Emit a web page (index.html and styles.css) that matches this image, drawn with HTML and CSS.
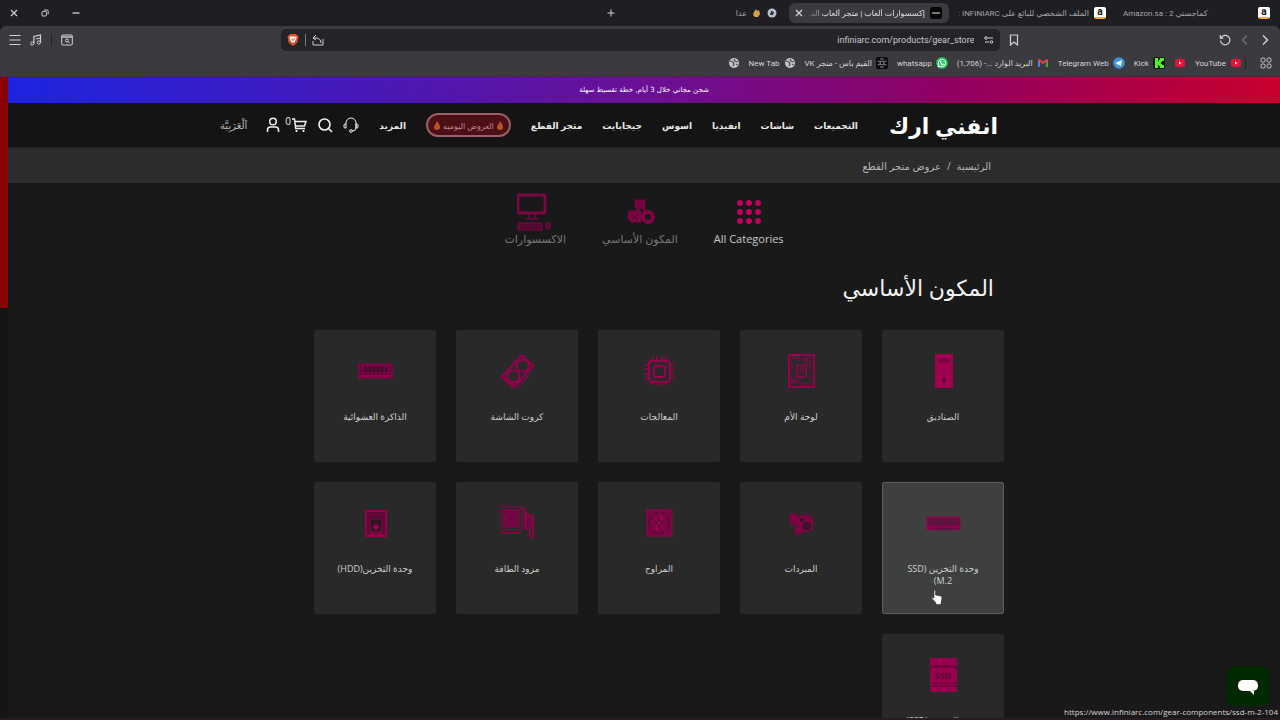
FILE: index.html
```html
<!DOCTYPE html>
<html lang="ar" dir="rtl">
<head>
    <meta charset="UTF-8">
    <meta name="viewport" content="width=device-width, initial-scale=1.0">
    <title>إكسسوارات ألعاب | متجر ألعاب القيمرز</title>
    <link rel="stylesheet" href="styles.css">
</head>
<body>
    <!-- Browser window -->
    <div class="tabstrip">
        <div class="tab">
            <span class="fav amazon">a</span>
            <span class="tab-title" dir="ltr">Amazon.sa : 2 كماجستي</span>
        </div>
        <div class="tab">
            <span class="fav amazon">a</span>
            <span class="tab-title">الملف الشخصي للبائع على INFINIARC :</span>
        </div>
        <div class="tab active">
            <span class="fav black"></span>
            <span class="tab-title">إكسسوارات ألعاب | متجر ألعاب القيـ</span>
            <button class="icon-btn" aria-label="إغلاق"><svg width="8" height="8" viewBox="0 0 8 8"><path d="M1 1l6 6M7 1L1 7" stroke-width="1.4"/></svg></button>
        </div>
        <div class="tab">
            <svg class="fav" viewBox="0 0 12 12"><circle cx="6" cy="6" r="4.5" fill="#b8c0c8" stroke="none"/><path d="M4 8l1-4 3 1-1 3z" fill="#26323c" stroke="none"/></svg>
            <svg class="hand" width="9" height="10" viewBox="0 0 9 10"><path d="M2 4l2-3 1 2 2-1 1 4-2 3H3L1 7z" fill="#d9a144" stroke="none"/></svg>
            <span class="tab-title">عدا</span>
        </div>
        <button class="icon-btn new-tab" aria-label="علامة تبويب جديدة"><svg width="8" height="8" viewBox="0 0 8 8"><path d="M4 0.500v7M.5 4h7"/></svg></button>
        <div class="window-buttons">
            <button class="icon-btn" aria-label="تصغير"><svg width="8" height="8" viewBox="0 0 8 8"><path d="M0.500 4h7" stroke-width="1.300"/></svg></button>
            <button class="icon-btn" aria-label="استعادة"><svg width="8" height="8" viewBox="0 0 8 8"><rect x="1" y="2.500" width="4.500" height="4.500" rx="1"/><path d="M3 1h3a1.200 1.200 0 0 1 1.200 1.200v3"/></svg></button>
            <button class="icon-btn" aria-label="إغلاق النافذة"><svg width="8" height="8" viewBox="0 0 8 8"><path d="M1 1l6 6M7 1L1 7" stroke-width="1.200"/></svg></button>
        </div>
    </div>

    <div class="toolbar">
        <button class="icon-btn" aria-label="رجوع"><svg width="12" height="12" viewBox="0 0 12 12"><path d="M4 1.500L8.500 6 4 10.500" stroke-width="1.500"/></svg></button>
        <button class="icon-btn dim" aria-label="تقدم"><svg width="12" height="12" viewBox="0 0 12 12"><path d="M8 1.500L3.500 6 8 10.500" stroke-width="1.200"/></svg></button>
        <button class="icon-btn" aria-label="إعادة تحميل"><svg width="12" height="12" viewBox="0 0 12 12"><path d="M1.500 6.500A4.700 4.700 0 1 0 3 2.600L1.500 4M1.300 1v3.200h3" stroke-width="1.200"/></svg></button>
        <span class="space-start"></span>
        <button class="icon-btn" aria-label="إشارة مرجعية"><svg width="12" height="12" viewBox="0 0 12 12"><path d="M2.500 1h7v10L6 8l-3.500 3z" stroke-width="1.200"/></svg></button>
        <div class="address">
            <svg width="10" height="10" viewBox="0 0 10 10"><circle cx="2" cy="3" r="1.300"/><path d="M4 3h5M1 7h4"/><circle cx="7.500" cy="7" r="1.300"/></svg>
            <input class="url" type="text" dir="ltr" aria-label="العنوان" value="infiniarc.com/products/gear_store">
            <svg width="12" height="12" viewBox="0 0 12 12"><path d="M1 4l3-3M1 4l3 2M1 4h3c3 0 5 2 5 5M1 7v4h10V5"/></svg>
            <span class="divider light"></span>
            <svg width="12" height="12" viewBox="0 0 12 12"><path d="M3 0h6l2.500 2.500L10.500 8.500 6 12 1.500 8.500.5 2.500z" fill="#d95426" stroke="none"/><path d="M3 2.500h6L9.500 4 8 7.500 6 9 4 7.500 2.500 4z" fill="#fff" stroke="none"/><path d="M4.500 4.500L6 6.500l1.500-2" stroke="#d95426"/></svg>
        </div>
        <span class="space-end"></span>
        <div class="toolbar-end">
            <button class="icon-btn" aria-label="بحث"><svg width="12" height="12" viewBox="0 0 12 12"><rect x=".7" y="1" width="10.600" height="10" rx="1"/><path d="M1 3h10" stroke-width="1.400"/><circle cx="6" cy="6.500" r="1.500"/><path d="M7 7.500l1.500 1.500"/></svg></button>
            <span class="divider"></span>
            <button class="icon-btn" aria-label="الوسائط"><svg width="12" height="12" viewBox="0 0 12 12"><circle cx="2.200" cy="9.500" r="1.600"/><circle cx="8.800" cy="8.500" r="1.600"/><path d="M3.900 9.500V2.500l6.600-1.500v7.500M6 5l4.500-1" stroke-width="1.200"/></svg></button>
            <button class="icon-btn" aria-label="القائمة"><svg width="12" height="12" viewBox="0 0 12 12"><path d="M.5 1.500h11M.5 6h11M.5 10.500h11"/></svg></button>
        </div>
    </div>

    <nav class="bookmarks">
        <button class="icon-btn" aria-label="التطبيقات"><svg width="12" height="12" viewBox="0 0 12 12"><rect x="1" y="1" width="4" height="4" rx="1.500"/><rect x="7" y="1" width="4" height="4" rx="1.500"/><rect x="1" y="7" width="4" height="4" rx="1.500"/><rect x="7" y="7" width="4" height="4" rx="1.500"/></svg></button>
        <span class="divider"></span>
        <a href="#"><svg class="fav" viewBox="0 0 12 12"><rect x="1" y="2" width="10" height="8" rx="2" fill="#e8113c" stroke="none"/><path d="M5 4.500v3L7.500 6z" fill="#fff" stroke="none"/></svg><span dir="ltr">YouTube</span></a>
        <a href="#" aria-label="YouTube"><svg class="fav" viewBox="0 0 12 12"><rect x="1" y="2" width="10" height="8" rx="2" fill="#e8113c" stroke="none"/><path d="M5 4.500v3L7.500 6z" fill="#fff" stroke="none"/></svg></a>
        <a href="#"><svg class="fav" viewBox="0 0 12 12"><path d="M0 0h12v12H0z" fill="#0b1c08" stroke="none"/><path d="M2 1h3v3h1V3h1V1h4v3H9v1H8v2h1v1h2v3H7V9H6V8H5v3H2z" fill="#4df321" stroke="none"/></svg><span dir="ltr">Kick</span></a>
        <a href="#"><svg class="fav" viewBox="0 0 12 12"><circle cx="6" cy="6" r="5.800" fill="#3c95d6" stroke="none"/><path d="M2.200 6L9 3 8 9 5.500 7.500 5 9 4.300 6.800z" fill="#fff" stroke="none"/></svg><span dir="ltr">Telegram Web</span></a>
        <a href="#"><svg class="fav" viewBox="0 0 12 12"><path d="M2 10V3" stroke="#4285f4" stroke-width="2"/><path d="M10 10V3" stroke="#34a853" stroke-width="2"/><path d="M1.500 2.500L6 6l4.500-3.500" stroke="#ea4335" stroke-width="2"/></svg><span>البريد الوارد ...- (1,706)</span></a>
        <a href="#"><svg class="fav" viewBox="0 0 12 12"><circle cx="6" cy="6" r="5.800" fill="#25d366" stroke="none"/><path d="M2 10l.8-2.300A3.600 3.600 0 1 1 4.500 9.300z" stroke="#fff"/><path d="M4.500 4c0 2 1.500 3.500 3.200 3.500" stroke="#fff" stroke-width="1.300"/></svg><span dir="ltr">whatsapp</span></a>
        <a href="#"><svg class="fav" viewBox="0 0 12 12"><path d="M0 0h12v12H0z" fill="#0a0a0b" stroke="none"/><circle cx="6" cy="6" r="2" stroke="#aaa" stroke-width=".8"/><path d="M1.500 4l3 1M1.500 8l3-1M10.500 4l-3 1M10.500 8l-3-1M4 2l4 0M4 10h4" stroke="#aaa" stroke-width=".8"/></svg><span>القيم باس - متجر VK</span></a>
        <a href="#"><svg class="fav" viewBox="0 0 12 12"><circle cx="6" cy="6" r="5" fill="#c6c7c9" stroke="none"/><path d="M2 4l3 1 1 2-1 2M6 2l1 2 3 1M8 7l1.500 1" stroke="#44444a" stroke-width="1.300"/></svg><span dir="ltr">New Tab</span></a>
        <a href="#" aria-label="New Tab"><svg class="fav" viewBox="0 0 12 12"><circle cx="6" cy="6" r="5" fill="#c6c7c9" stroke="none"/><path d="M2 4l3 1 1 2-1 2M6 2l1 2 3 1M8 7l1.500 1" stroke="#44444a" stroke-width="1.300"/></svg></a>
    </nav>

    <!-- Site -->
    <div class="viewport">
        <div class="page">
            <div class="promo">شحن مجاني خلال 3 أيام, خطة تقسيط سهلة</div>

            <header class="header">
                <a class="logo" href="#">انفني ارك</a>
                <nav class="menu">
                    <a href="#">التجميعات</a>
                    <a href="#">شاشات</a>
                    <a href="#">انفيديا</a>
                    <a href="#">اسوس</a>
                    <a href="#">جيجابايت</a>
                    <a href="#">متجر القطع</a>
                    <a class="offers" href="#">
                        <svg width="6" height="9" viewBox="0 0 6 9"><path d="M3 0c1 2 3 3 3 6a3 3 0 0 1-6 0c0-2 2-3 3-6z" fill="#b5541f" stroke="none"/></svg>
                        العروض اليوميه
                        <svg width="6" height="9" viewBox="0 0 6 9"><path d="M3 0c1 2 3 3 3 6a3 3 0 0 1-6 0c0-2 2-3 3-6z" fill="#b5541f" stroke="none"/></svg>
                    </a>
                    <a href="#">المزيد</a>
                </nav>
                <div class="actions">
                    <a href="#" aria-label="الدعم"><svg width="16" height="16" viewBox="0 0 16 16"><path d="M3 7V6a5 5 0 0 1 10 0v5q0 3-4 3M3 7H2Q1 7 1 8v2q0 1 1 1h1zM13 7h1q1 0 1 1v2q0 1-1 1h-1z"/><circle cx="8" cy="14" r="1.300"/></svg></a>
                    <a href="#" aria-label="بحث"><svg width="16" height="16" viewBox="0 0 16 16"><circle cx="7.500" cy="7.500" r="5.500" stroke-width="1.600"/><path d="M11.500 11.500L15 15" stroke-width="1.600"/></svg></a>
                    <a class="cart" href="#" aria-label="السلة"><svg width="16" height="16" viewBox="0 0 16 16"><path d="M1 2h2.500l1.200 9.500H14M4 4.500h11L13.500 9H4.500" stroke-width="1.500"/><circle cx="5.500" cy="14" r="1.100" fill="#fff" stroke="none"/><circle cx="12.500" cy="14" r="1.100" fill="#fff" stroke="none"/></svg><span class="count">0</span></a>
                    <a href="#" aria-label="حسابي"><svg width="16" height="16" viewBox="0 0 16 16"><circle cx="8" cy="4.500" r="3.300" stroke-width="1.500"/><path d="M2.500 15v-2q0-3 3-3h5q3 0 3 3v2" stroke-width="1.500"/></svg></a>
                    <a class="lang" href="#">اَلْعَرَبِيَّة</a>
                </div>
            </header>

            <div class="breadcrumb">
                <a href="#">الرئيسية</a>
                <span>/</span>
                <span>عروض متجر القطع</span>
            </div>

            <main class="content">
                <div class="category-tabs">
                    <a class="current" href="#">
                        <svg width="36" height="36" viewBox="0 0 36 36"><g fill="#c00058" stroke="none"><circle cx="9" cy="9" r="3"/><circle cx="18" cy="9" r="3"/><circle cx="27" cy="9" r="3"/><circle cx="9" cy="18" r="3"/><circle cx="18" cy="18" r="3"/><circle cx="27" cy="18" r="3"/><circle cx="9" cy="27" r="3"/><circle cx="18" cy="27" r="3"/><circle cx="27" cy="27" r="3"/></g></svg>
                        <span dir="ltr">All Categories</span>
                    </a>
                    <a href="#">
                        <svg width="36" height="36" viewBox="0 0 36 36"><path d="M13 6h10v8H13z" fill="#7d0542"/><path d="M7 17h12v11H9l-3-4z" fill="#7d0542"/><circle cx="26" cy="23" r="5" stroke-width="4"/><path d="M15 8h6M15 11h6M9 20l7 6M10 25l6-5" stroke="#4a0a2a"/><path d="M18 14l-4 3M20 14l4 3M19 22h2" stroke-width="2"/></svg>
                        <span>المكون الأساسي</span>
                    </a>
                    <a href="#">
                        <svg width="36" height="40" viewBox="0 0 36 40"><rect x="1" y="3" width="27" height="18" rx="1" stroke-width="3"/><path d="M12 22v4M18 22v4M9 27h12" stroke-width="1.500"/><rect x="1" y="31" width="24" height="7" fill="#5c0835"/><path d="M3 33h21M3 36h21" stroke="#2d1020" stroke-dasharray="2 1"/><path d="M29 31v4a2 2 0 0 0 4 0v-4z" fill="#5c0835"/></svg>
                        <span>الاكسسوارات</span>
                    </a>
                </div>

                <h1 class="title">المكون الأساسي</h1>

                <div class="cards">
                    <a class="card" href="#">
                        <svg width="36" height="36" viewBox="0 0 36 36"><path d="M10 1h18v34H10z" fill="#a00050" stroke="none"/><path d="M14 6h10l1 2H13zM13 9h12" stroke="#5c0835"/><circle cx="19" cy="27" r="2" fill="#5c0835" stroke="none"/></svg>
                        <span>الصناديق</span>
                    </a>
                    <a class="card" href="#">
                        <svg width="36" height="36" viewBox="0 0 36 36"><rect x="6" y="2" width="25" height="32" stroke-width="2"/><rect x="14" y="12" width="9" height="12" rx="2" stroke-width="1.500"/><path d="M17 21v-6h3v6M8 5h9v3M20 5h8M24 5v7M27 8v10M9 9v10M12 24v7M9 23v9M15 31h13M8 28h10M27 22v5M21 8h3" /></svg>
                        <span>لوحة الأم</span>
                    </a>
                    <a class="card" href="#">
                        <svg width="36" height="36" viewBox="0 0 36 36"><rect x="8" y="8" width="21" height="21" rx="3" stroke-width="2"/><rect x="13" y="13" width="11" height="11" rx="1" stroke-width="2"/><path d="M12 8V4M16 8V3M21 8V3M25 8V4M12 29v3M16 29v4M21 29v4M25 29v3M8 12H4M8 16H3M8 21H3M8 25H4M29 12h4M29 16h4M29 21h4M29 25h4" stroke-width="1.500"/></svg>
                        <span>المعالجات</span>
                    </a>
                    <a class="card" href="#">
                        <svg width="36" height="36" viewBox="0 0 36 36"><g transform="translate(1 0) rotate(-48 18 18)"><rect x="4" y="10" width="28" height="16" stroke-width="2"/><circle cx="11" cy="18" r="6" stroke-width="2"/><circle cx="25" cy="18" r="6" stroke-width="2"/><path d="M2 8v20M6 29h16"/></g></svg>
                        <span>كروت الشاشة</span>
                    </a>
                    <a class="card" href="#">
                        <svg width="36" height="36" viewBox="0 0 36 36"><rect x="2" y="11" width="33" height="14" fill="#5c0835"/><rect x="5" y="13" width="27" height="7" stroke-width="1.200"/><path d="M9 13v7M13 13v7M17 13v7M21 13v7M25 13v7M29 13v7" stroke="#33132a" stroke-width="1.200"/><path d="M2 23h33" stroke-width="2"/></svg>
                        <span>الذاكرة العشوائية</span>
                    </a>

                    <div class="card-hover">
                        <a class="card hovered" href="#">
                            <svg width="36" height="36" viewBox="0 0 36 36"><rect x="2" y="12" width="33" height="13" rx="1" fill="#700b43"/><path d="M6.500 14v6M10.500 14v6M14.500 14v6M18.500 14v6M22.500 14v6M26.500 14v6M30.500 14v6" stroke="#3f2636" stroke-width="1.500"/><path d="M2 22h33" stroke-width="1.500"/><path d="M12 24h18" stroke="#47203a"/></svg>
                            <span>وحدة التخزين (SSD M.2)</span>
                        </a>
                        <svg class="cursor" width="12" height="16" viewBox="0 0 12 16"><path d="M3 1q1.500-.5 1.500 1v4l5 1q1.500.5 1.500 2l-1 5v1.500H5V14L1 9.500q0-1.500 2-.5z" fill="#fff" stroke="#333" stroke-width=".6"/></svg>
                    </div>
                    <a class="card" href="#">
                        <svg width="36" height="36" viewBox="0 0 36 36"><path d="M6 9l6-1 3 3 7-2 8 3v13l-8 2-9 4-2-6 4-5-7 1z" fill="#760640" stroke="none"/><circle cx="24" cy="21" r="5" fill="#3a1428"/><circle cx="19" cy="15" r="3" fill="#3a1428"/><path d="M13 27l4-3M9 12l3 4"/></svg>
                        <span>المبردات</span>
                    </a>
                    <a class="card" href="#">
                        <svg width="36" height="36" viewBox="0 0 36 36"><rect x="6" y="5" width="25" height="26" fill="#780544"/><circle cx="18" cy="18" r="10" stroke="#3f1029"/><circle cx="18" cy="18" r="3" stroke="#3f1029"/><path d="M11 10l14 16M25 10L11 26M18 8q4 3 2 8M18 28q-4-3-2-8" stroke="#b00058"/></svg>
                        <span>المراوح</span>
                    </a>
                    <a class="card" href="#">
                        <svg width="36" height="36" viewBox="0 0 36 36"><rect x="2" y="2" width="21" height="23"/><rect x="5" y="5" width="15" height="17" fill="#6a0840"/><circle cx="12" cy="13" r="5"/><path d="M2 28h19M23 4h3v4l8 3v23M26 8v15l5 2v9M29 10v14" stroke-width="1.600"/><path d="M27 11l6 3v8l-6-2z" fill="#6a0840"/></svg>
                        <span>مزود الطاقة</span>
                    </a>
                    <a class="card" href="#">
                        <svg width="36" height="36" viewBox="0 0 36 36"><path d="M9 6h20v25H9z" fill="#5c0835" stroke-width="2"/><rect x="13" y="9" width="12" height="18" fill="#2b1721"/><path d="M14 14h10M9 29h20M14 11h10"/><path d="M19 19l3 3-3 3-3-3z" fill="#a00050"/></svg>
                        <span>وحدة التخزين(HDD)</span>
                    </a>

                    <a class="card" href="#">
                        <svg width="36" height="36" viewBox="0 0 36 36"><path d="M5 1h27v34H5z" fill="#98004f" stroke="none"/><path d="M5 9h27M5 12q2-2 4-2h20q3 0 3 3M6 26h25M5 29h27" stroke="#560832"/><text x="18" y="22" text-anchor="middle" class="ssd-text">SSD</text></svg>
                        <span>وحدة التخزين (SSD)</span>
                    </a>
                </div>
            </main>
        </div>
        <div class="scrollbar"><div class="thumb"></div></div>
        <button class="chat" aria-label="محادثة"><svg width="20" height="16" viewBox="0 0 20 16"><rect x="0" y="1" width="20" height="11" rx="5" fill="#fff" stroke="none"/><path d="M12 12h4v4z" fill="#fff" stroke="none"/></svg></button>
        <div class="status" dir="ltr">https://www.infiniarc.com/gear-components/ssd-m-2-104</div>
    </div>
</body>
</html>
```
FILE: styles.css
```css
* {
    box-sizing: border-box;
}
body {
    margin: 0;
    height: 100vh;
    display: flex;
    flex-direction: column;
    overflow: hidden;
    background-color: #191919;
    color: #e8e8e8;
    font-family: "Open Sans", "DejaVu Sans", sans-serif;
    font-size: 10px;
}
a {
    color: inherit;
    text-decoration: none;
}
svg {
    fill: none;
    stroke: #d0d0d2;
    flex-shrink: 0;
}
.icon-btn {
    display: flex;
    padding: 0;
    border: none;
    background: none;
    cursor: pointer;
}
.dim {
    opacity: 0.4;
}
.divider {
    width: 1px;
    height: 12px;
    background-color: #222226;
}
.divider.light {
    background-color: #77777c;
}
.fav {
    width: 12px;
    height: 12px;
    border-radius: 2px;
    flex-shrink: 0;
}

/* tabs */
.tabstrip {
    display: flex;
    align-items: center;
    gap: 4px;
    height: 26px;
    padding: 0 3px 0 10px;
    background-color: #1f1e23;
    font-family: Roboto, "DejaVu Sans", sans-serif;
    font-size: 8px;
    flex-shrink: 0;
}
.tab {
    display: flex;
    align-items: center;
    gap: 5px;
    width: 160px;
    height: 20px;
    padding: 0 7px 0 6px;
    border-radius: 6px;
    color: #a5a5a8;
}
.tab.active {
    background-color: #3b3a3e;
    color: #e2e2e4;
}
.tab-title {
    flex: 1;
    overflow: hidden;
    white-space: nowrap;
}
.tab.active .tab-title {
    mask-image: linear-gradient(to left, #000 85%, transparent);
}
.amazon {
    background-color: #fff;
    color: #111;
    font-size: 10px;
    font-weight: bold;
    line-height: 10px;
    text-align: center;
    border-bottom: 2px solid #f0a93a;
}
.black {
    background: linear-gradient(#060606 45%, #777 45%, #777 55%, #060606 55%);
    background-clip: content-box;
    background-color: #060606;
    padding: 0 2px;
    box-shadow: inset 2px 0 #060606, inset -2px 0 #060606;
}
.new-tab {
    margin-right: 6px;
}
.window-buttons {
    display: flex;
    gap: 23px;
    margin-right: auto;
}

/* toolbar */
.toolbar {
    display: flex;
    align-items: center;
    gap: 8px;
    height: 28px;
    padding: 0 9px;
    background-color: #3b3a3e;
    border-radius: 6px 6px 0 0;
    flex-shrink: 0;
}
.space-start {
    flex: 19;
}
.space-end {
    flex: 20;
}
.address {
    display: flex;
    align-items: center;
    gap: 6px;
    width: 57%;
    height: 22px;
    padding: 0 6px;
    border-radius: 5px;
    background-color: #242328;
}
.url {
    flex: 1;
    min-width: 0;
    padding: 0 4px 0 0;
    border: none;
    outline: none;
    background: none;
    color: #c8c8ca;
    font-family: Roboto, sans-serif;
    font-size: 9px;
    text-align: right;
}
.toolbar-end {
    display: flex;
    align-items: center;
    gap: 9px;
}

/* bookmarks */
.bookmarks {
    display: flex;
    align-items: center;
    gap: 9px;
    height: 22px;
    padding: 0 8px 4px;
    background-color: #3b3a3e;
    color: #d5d5d7;
    font-family: Roboto, "DejaVu Sans", sans-serif;
    font-size: 8px;
    flex-shrink: 0;
}
.bookmarks .divider {
    margin: 0 5px 0 -6px;
}
.bookmarks a {
    display: flex;
    align-items: center;
    gap: 4px;
    white-space: nowrap;
}

/* page area */
.viewport {
    position: relative;
    display: flex;
    flex: 1;
    min-height: 0;
    border-top: 1px solid #4a2540;
    border-bottom: 2px solid #2a1a21;
}
.page {
    flex: 1;
    min-width: 0;
    overflow: hidden;
}
.scrollbar {
    width: 8px;
    background-color: #151515;
}
.thumb {
    height: 36%;
    background-color: #8b0000;
}
.promo {
    height: 26px;
    line-height: 26px;
    text-align: center;
    color: #fff;
    font-family: "DejaVu Sans", sans-serif;
    font-size: 7px;
    background: linear-gradient(100deg, #1c24e0, #6a1096 50%, #92005f 75%, #c8002c);
}
.header {
    display: flex;
    align-items: center;
    height: 45px;
    padding: 0 282px 0 212px;
    background-color: #141414;
    border-bottom: 1px solid #222;
}
.logo {
    color: #fff;
    font-size: 22px;
    font-weight: bold;
    line-height: 30px;
    white-space: nowrap;
}
.menu {
    display: flex;
    align-items: center;
    gap: 20px;
    margin-right: auto;
    font-size: 9px;
    font-weight: bold;
    white-space: nowrap;
}
.offers {
    display: flex;
    align-items: center;
    gap: 3px;
    height: 24px;
    padding: 0 6px;
    border: 2px solid #9a5f66;
    border-radius: 12px;
    background-color: #4c0f15;
    color: #b98a8d;
    font-size: 8px;
    font-weight: normal;
}
.actions {
    display: flex;
    align-items: center;
    gap: 10px;
    margin-right: 20px;
}
.actions svg {
    display: block;
    stroke: #f0f0f0;
}
.cart {
    position: relative;
}
.count {
    position: absolute;
    top: -3px;
    left: -6px;
}
.lang {
    margin-right: 8px;
    color: #bbb;
    white-space: nowrap;
}
.breadcrumb {
    display: flex;
    align-items: center;
    gap: 6px;
    height: 35px;
    padding-right: 289px;
    background-color: #2c2c2c;
    color: #b5b5b5;
    font-size: 10px;
}
.content {
    width: 690px;
    margin-right: 276px;
}
.category-tabs {
    display: flex;
    justify-content: center;
    gap: 36px;
    padding-top: 9px;
    margin-right: 30px;
    color: #777;
    font-size: 11px;
}
.category-tabs a {
    display: flex;
    flex-direction: column;
    align-items: center;
    height: 60px;
    white-space: nowrap;
}
.category-tabs svg {
    height: 40px;
    stroke: #7d0542;
}
.category-tabs span {
    line-height: 14px;
}
.category-tabs .current {
    color: #c9c9c9;
}
.title {
    margin: 15px 10px 23px;
    color: #f2f2f2;
    font-size: 22px;
    font-weight: normal;
    line-height: 40px;
}
.cards {
    display: grid;
    grid-template-columns: repeat(5, 1fr);
    gap: 20px;
}
.card {
    display: flex;
    flex-direction: column;
    align-items: center;
    gap: 22px;
    height: 132px;
    padding: 22px 20px 0;
    border: 1px solid #292929;
    border-radius: 2px;
    background-color: #292929;
    color: #cfcfcf;
    font-size: 9px;
    line-height: 12px;
    text-align: center;
}
.card svg {
    stroke: #98004f;
}
.card-hover {
    position: relative;
}
.card.hovered {
    border-color: #5c5e5d;
    background-color: #3e403f;
}
.cursor {
    position: absolute;
    top: 107px;
    left: 49px;
}
.ssd-text {
    fill: #560832;
    stroke: none;
    font-size: 9px;
    font-weight: bold;
}
.chat {
    position: absolute;
    right: 10px;
    bottom: 10px;
    display: flex;
    align-items: center;
    justify-content: center;
    width: 44px;
    height: 42px;
    padding: 0;
    border: none;
    border-radius: 10px;
    background-color: #022a02;
    cursor: pointer;
}
.status {
    position: absolute;
    right: 0;
    bottom: 0;
    padding: 0 2px;
    background-color: #191919;
    color: #d5d5d5;
    font-size: 8px;
    line-height: 12px;
}
```
